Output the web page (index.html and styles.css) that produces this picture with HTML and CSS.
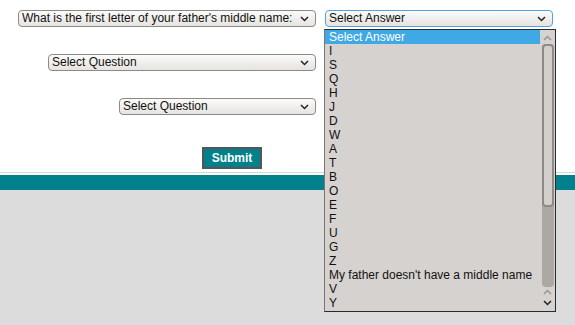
FILE: index.html
```html
<!DOCTYPE html>
<html lang="en">
<head>
<meta charset="UTF-8" />
<meta name="viewport" content="width=device-width, initial-scale=1" />
<title>Security Questions</title>
<link rel="stylesheet" href="styles.css">
</head>
<body>
  <div class="page">
    <form class="security" autocomplete="off">
      <div class="row">
        <div class="select q1">
          <span>What is the first letter of your father's middle name:</span>
          <svg class="chev" width="9" height="6" viewBox="0 0 9 6"><polyline points="1,1 4.5,4.5 8,1" fill="none" stroke="#222" stroke-width="1.5"/></svg>
        </div>
        <div class="select answer focused">
          <span>Select Answer</span>
          <svg class="chev" width="9" height="6" viewBox="0 0 9 6"><polyline points="1,1 4.5,4.5 8,1" fill="none" stroke="#222" stroke-width="1.5"/></svg>
        </div>
      </div>

      <div class="row">
        <div class="select q2">
          <span>Select Question</span>
          <svg class="chev" width="9" height="6" viewBox="0 0 9 6"><polyline points="1,1 4.5,4.5 8,1" fill="none" stroke="#222" stroke-width="1.5"/></svg>
        </div>
      </div>

      <div class="row">
        <div class="select q3">
          <span>Select Question</span>
          <svg class="chev" width="9" height="6" viewBox="0 0 9 6"><polyline points="1,1 4.5,4.5 8,1" fill="none" stroke="#222" stroke-width="1.5"/></svg>
        </div>
      </div>

      <div class="actions">
        <button type="submit">Submit</button>
      </div>
    </form>

    <div class="rule"></div>
    <div class="band"></div>
    <div class="footer"></div>

    <!-- open list of the answer select -->
    <div class="dropdown">
      <ul class="options">
        <li class="active">Select Answer</li>
        <li>I</li>
        <li>S</li>
        <li>Q</li>
        <li>H</li>
        <li>J</li>
        <li>D</li>
        <li>W</li>
        <li>A</li>
        <li>T</li>
        <li>B</li>
        <li>O</li>
        <li>E</li>
        <li>F</li>
        <li>U</li>
        <li>G</li>
        <li>Z</li>
        <li>My father doesn't have a middle name</li>
        <li>V</li>
        <li>Y</li>
      </ul>
      <div class="scrollbar">
        <svg class="arrow" width="9" height="6" viewBox="0 0 9 6"><polyline points="1,5 4.5,1.5 8,5" fill="none" stroke="#9a9692" stroke-width="1.5"/></svg>
        <div class="trough"><div class="thumb"></div></div>
        <svg class="arrow" width="9" height="6" viewBox="0 0 9 6"><polyline points="1,5 4.5,1.5 8,5" fill="none" stroke="#9a9692" stroke-width="1.5"/></svg>
        <svg class="arrow" width="9" height="6" viewBox="0 0 9 6"><polyline points="1,1 4.5,4.5 8,1" fill="none" stroke="#222" stroke-width="1.5"/></svg>
      </div>
    </div>
  </div>
</body>
</html>
```

FILE: styles.css
```css
* {
  box-sizing: border-box;
}
html, body {
  margin: 0;
  padding: 0;
  height: 100%;
}
body {
  font-family: 'Liberation Sans', Arial, sans-serif;
  font-size: 12px;
  color: #111;
  background: #dcdcdc;
}

.page {
  position: relative;
  min-height: 100%;
  display: flex;
  flex-direction: column;
}

.security {
  background: #fff;
  padding-top: 10px;
  display: flex;
  flex-direction: column;
  gap: 27px;
}

.row {
  display: grid;
  grid-template-columns: 316px 228px;
  column-gap: 9px;
  height: 17px;
}

.select {
  display: flex;
  align-items: center;
  justify-content: space-between;
  height: 17px;
  padding: 0 6px 0 3px;
  border: 1px solid #8c8a87;
  border-radius: 4px;
  background: linear-gradient(#fbfbfa, #e6e3e0);
  white-space: nowrap;
  line-height: 15px;
}
.select span {
  overflow: hidden;
}
.select.focused {
  border-color: #4fa3e3;
}
.q1 {
  justify-self: end;
  width: 298px;
}
.q2 {
  justify-self: end;
  width: 268px;
}
.q3 {
  justify-self: end;
  width: 197px;
}
.chev {
  flex: none;
}

.actions {
  padding-left: 202px;
  margin-top: 5px;
  padding-bottom: 3px;
}
button {
  width: 60px;
  height: 22px;
  padding: 0;
  font-family: 'Liberation Sans', Arial, sans-serif;
  font-size: 12px;
  font-weight: 700;
  color: #fff;
  background: #02808c;
  border: 2px solid #555;
  cursor: pointer;
}

.rule {
  height: 1px;
  background: #d6d6d6;
  border-bottom: 2px solid #fff;
  box-sizing: content-box;
}
.band {
  height: 15px;
  background: #02808c;
}
.footer {
  flex: 1;
  background: #dcdcdc;
}

.dropdown {
  position: absolute;
  left: 324px;
  top: 29px;
  width: 232px;
  height: 283px;
  display: flex;
  background: #d6d2cf;
  border: 1px solid #2a2a2a;
  border-left-color: #7a7775;
}
.options {
  list-style: none;
  margin: 0;
  padding: 0;
  flex: 1;
}
.options li {
  height: 14px;
  line-height: 14px;
  padding-left: 4px;
  white-space: nowrap;
  color: #111;
}
.options li.active {
  background: #3fa8e5;
  color: #fff;
}

.scrollbar {
  width: 15px;
  display: flex;
  flex-direction: column;
  align-items: center;
  padding: 3px 0 2px;
}
.arrow {
  flex: none;
  margin: 2px 0 3px;
}
.trough {
  flex: 1;
  width: 12px;
  border-radius: 4px;
  background: #aca8a4;
  display: flex;
  flex-direction: column;
}
.thumb {
  height: 163px;
  border: 2px solid #8e8a86;
  border-radius: 4px;
  background: #d3cfcb;
}
```
